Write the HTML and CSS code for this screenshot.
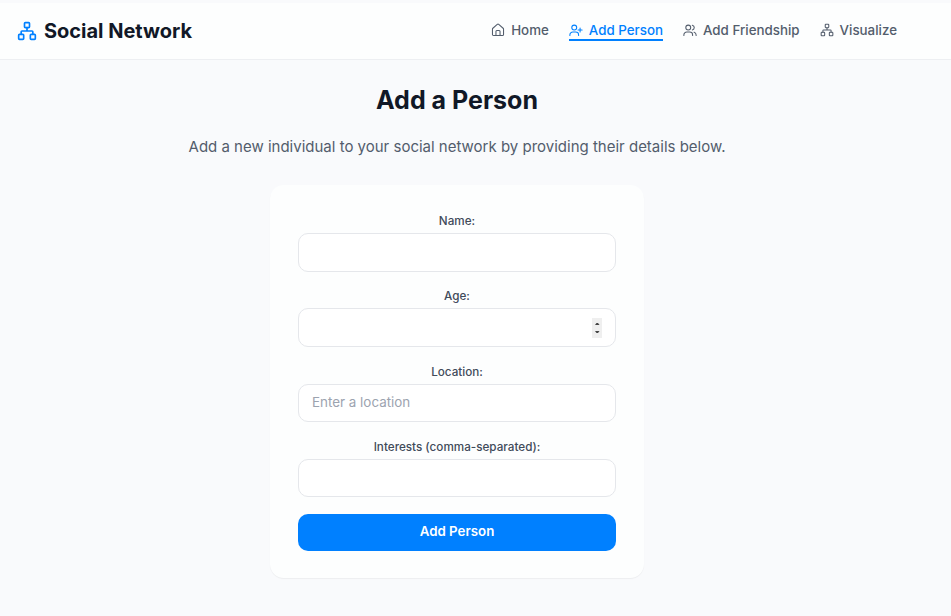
FILE: index.html
```html
<!DOCTYPE html>
<html lang="en">
<head>
<meta charset="utf-8">
<title>Social Network</title>
<link rel="stylesheet" href="styles.css">
</head>
<body>
<div class="page">
  <header class="header">
    <a class="brand">
      <svg class="brand-icon" viewBox="0 0 24 24"><rect x="9" y="2" width="6" height="6" rx="1"/><rect x="2" y="16" width="6" height="6" rx="1"/><rect x="16" y="16" width="6" height="6" rx="1"/><path d="M12 8v4M5 16v-3a1 1 0 0 1 1-1h12a1 1 0 0 1 1 1v3"/></svg>
      <span class="brand-name">Social Network</span>
    </a>
    <nav class="nav">
      <a class="link"><svg class="icon" viewBox="0 0 24 24"><path d="M15.500 21.500v-7a1.500 1.500 0 0 0-1.500-1.500h-4a1.500 1.500 0 0 0-1.500 1.500v7"/><path d="M2.500 10.500a2 2 0 0 1 .709-1.528l7.500-6.500a2 2 0 0 1 2.582 0l7.500 6.500a2 2 0 0 1 .709 1.528v9a2 2 0 0 1-2 2h-15a2 2 0 0 1-2-2z"/></svg><span>Home</span></a>
      <a class="link active"><svg class="icon" viewBox="0 0 24 24"><circle cx="9" cy="7.800" r="4.200"/><path d="M1.500 21.500v-1a5 5 0 0 1 5-5h5a5 5 0 0 1 5 5v1M19 8.500v7M15.500 12h7"/></svg><span>Add Person</span></a>
      <a class="link"><svg class="icon" viewBox="0 0 24 24"><circle cx="9" cy="7.800" r="4.200"/><path d="M1.500 21.500v-1a5 5 0 0 1 5-5h5a5 5 0 0 1 5 5v1M22.500 21.500v-1a5 5 0 0 0-3.500-4.800M16 3.700a4.200 4.200 0 0 1 0 8.200"/></svg><span>Add Friendship</span></a>
      <a class="link"><svg class="icon" viewBox="0 0 24 24"><rect x="9" y="2" width="6" height="6" rx="1"/><rect x="2" y="16" width="6" height="6" rx="1"/><rect x="16" y="16" width="6" height="6" rx="1"/><path d="M12 8v4M5 16v-3a1 1 0 0 1 1-1h12a1 1 0 0 1 1 1v3"/></svg><span>Visualize</span></a>
    </nav>
  </header>
  <main class="main">
    <h1 class="title">Add a Person</h1>
    <p class="intro">Add a new individual to your social network by providing their details below.</p>
    <form class="card">
      <div class="field"><label class="label" for="name">Name:</label><input class="input" id="name"></div>
      <div class="field"><label class="label" for="age">Age:</label>
        <div class="age"><input class="input" id="age"><span class="spinner"><svg class="arrows" viewBox="0 0 10 20"><path d="M3 7h4.500L6 5H4.500zM3 13h4.500L6 15H4.500z"/></svg></span></div></div>
      <div class="field"><label class="label" for="location">Location:</label><input class="input short" id="location" placeholder="Enter a location"></div>
      <div class="field"><label class="label" for="interests">Interests (comma-separated):</label><input class="input short" id="interests"></div>
      <button class="submit" type="button">Add Person</button>
    </form>
  </main>
</div>
</body>
</html>
```
FILE: styles.css
```css
* { box-sizing: border-box; }
body {
  margin: 0;
  height: 616px;
  overflow: hidden;
  background: #f9fafc;
  color: #111827;
  font-family: Inter, "Liberation Sans", sans-serif;
}
.page { padding-top: 3px; }
.header {
  display: flex;
  align-items: center;
  justify-content: space-between;
  height: 57px;
  padding: 0 54px 0 17px;
  background: #fdfefe;
  border-bottom: 1px solid #edeff2;
}
.brand { display: flex; align-items: center; gap: 7px; }
.brand-icon, .icon { fill: none; stroke-linejoin: round; stroke-linecap: round; }
.brand-icon { width: 20px; height: 20px; stroke: #0080ff; stroke-width: 2; }
.brand-name { font-size: 20px; font-weight: 700; line-height: 28px; letter-spacing: -0.02px; }
.nav { display: flex; gap: 20px; }
.link {
  display: flex;
  align-items: center;
  gap: 6px;
  height: 21px;
  margin-bottom: 1px;
  padding-top: 1px;
  color: #535d6c;
  font-size: 13.350px;
  font-weight: 500;
  border-bottom: 2px solid transparent;
}
.active { color: #0080ff; border-color: #0080ff; }
.icon { width: 14px; height: 14px; stroke: currentColor; stroke-width: 1.8; }
.main {
  display: flex;
  flex-direction: column;
  align-items: center;
  width: 914px;
  padding-top: 24px;
}
.title { margin: 0; font-size: 25px; font-weight: 700; line-height: 32px; }
.intro { margin: 19px 0 26px; color: #535d6c; font-size: 15px; line-height: 24px; }
.card {
  display: flex;
  flex-direction: column;
  width: 374px;
  height: 393px;
  padding: 27px 28px;
  border-radius: 14px;
  background: #fdfefe;
  box-shadow: 0 1px 1px rgba(0, 0, 0, 0.05);
}
.field { display: flex; flex-direction: column; height: 75.300px; }
.label {
  height: 21px;
  color: #414b5a;
  font-size: 11.700px;
  font-weight: 500;
  line-height: 18px;
  text-align: center;
}
.input {
  display: block;
  width: 100%;
  height: 39px;
  padding: 0 13px 2px;
  border: 1px solid #e5e7eb;
  border-radius: 10px;
  outline: 0;
  background: #fff;
  font: 13.400px Inter, "Liberation Sans", sans-serif;
}
.short { height: 38px; }
.input::placeholder { color: #9ca3af; }
.age { position: relative; }
.spinner { position: absolute; top: 10px; right: 14px; width: 10px; height: 20px; background: #efefef; }
.arrows { display: block; width: 10px; height: 20px; fill: #444; }
.submit {
  height: 37px;
  margin-top: 1px;
  padding: 0 0 3px;
  border: 0;
  border-radius: 10px;
  background: #0080ff;
  color: #fff;
  font: 600 13.300px Inter, "Liberation Sans", sans-serif;
}
```
